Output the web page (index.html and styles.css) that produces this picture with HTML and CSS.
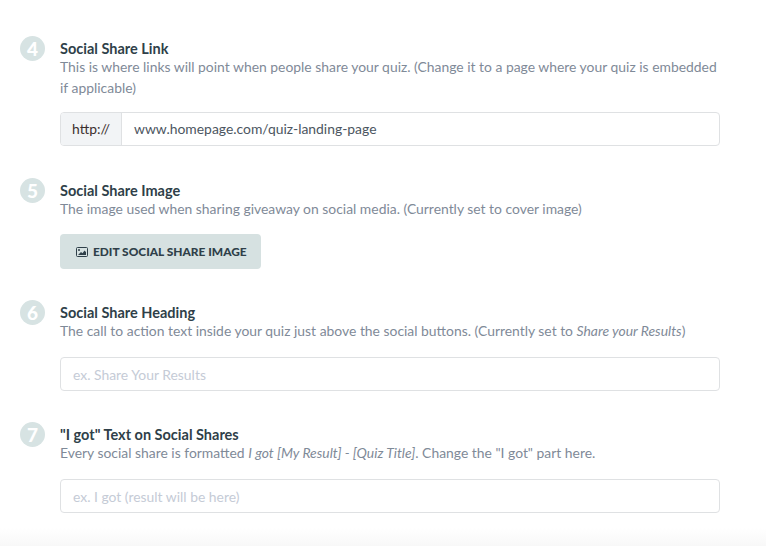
FILE: index.html
```html
<!DOCTYPE html>
<html lang="en">
<head>
  <meta charset="UTF-8"/>
  <meta name="viewport" content="width=device-width, initial-scale=1.0"/>
  <title>Social Share Settings</title>
  <link rel="stylesheet" href="styles.css">
</head>
<body>
  <div class="settings">

    <div class="step">
      <div class="step-num">4</div>
      <div class="step-body">
        <div class="step-title">Social Share Link</div>
        <div class="step-desc">This is where links will point when people share your quiz. (Change it to a page where your quiz is embedded if applicable)</div>
        <div class="field">
          <span class="field-prefix">http://</span>
          <span class="field-value">www.homepage.com/quiz-landing-page</span>
        </div>
      </div>
    </div>

    <div class="step">
      <div class="step-num">5</div>
      <div class="step-body">
        <div class="step-title">Social Share Image</div>
        <div class="step-desc">The image used when sharing giveaway on social media. (Currently set to cover image)</div>
        <button class="edit-btn">
          <svg class="edit-icon" viewBox="0 0 12 10" width="12" height="10">
            <rect x="0.5" y="0.5" width="11" height="9" rx="1" fill="none" stroke="#2f3f49"/>
            <circle cx="3" cy="3" r="1" fill="#2f3f49"/>
            <path d="M2 8 L5 5 L6.5 6.2 L8.5 3.5 L10 5 V8 Z" fill="#2f3f49"/>
          </svg>
          EDIT SOCIAL SHARE IMAGE
        </button>
      </div>
    </div>

    <div class="step">
      <div class="step-num">6</div>
      <div class="step-body">
        <div class="step-title">Social Share Heading</div>
        <div class="step-desc">The call to action text inside your quiz just above the social buttons. (Currently set to <em>Share your Results</em>)</div>
        <input class="text-input" type="text" placeholder="ex. Share Your Results"/>
      </div>
    </div>

    <div class="step">
      <div class="step-num">7</div>
      <div class="step-body">
        <div class="step-title">"I got" Text on Social Shares</div>
        <div class="step-desc">Every social share is formatted <em>I got [My Result] - [Quiz Title]</em>. Change the "I got" part here.</div>
        <input class="text-input" type="text" placeholder="ex. I got (result will be here)"/>
      </div>
    </div>

  </div>
  <div class="bottom-fade"></div>
</body>
</html>
```

FILE: styles.css
```css
* {
  margin: 0; padding: 0; box-sizing: border-box;
}
html, body {
  height: 100%;
  overflow: hidden;
}
body {
  position: relative;
  background: #fff;
  font-family: "Lato", "Liberation Sans", sans-serif;
  font-size: 13.9px;
  color: #7f8a98;
}
.settings {
  padding: 39px 46px 0 20px;
}
.step {
  display: flex;
  gap: 16px;
}
.step + .step {
  margin-top: 34px;
}
.step-num {
  flex: none;
  width: 25px;
  height: 25px;
  margin-top: -3px;
  margin-right: -1px;
  border-radius: 50%;
  background: #d7e3e3;
  color: #fff;
  font-size: 19px;
  font-weight: 900;
  line-height: 25px;
  text-align: center;
}
.step-body {
  flex: 1;
  min-width: 0;
}
.step-title {
  margin-bottom: -2px;
  color: #2f3f49;
  font-size: 14.5px;
  font-weight: 700;
  line-height: 19px;
}
.step-desc {
  line-height: 21px;
}
.step-desc em {
  font-style: italic;
}
.field {
  display: flex;
  height: 34px;
  margin: 14px 0 1px;
  border: 1px solid #dfe1e3;
  border-radius: 4px;
  line-height: 32px;
  overflow: hidden;
}
.field-prefix {
  width: 61px;
  background: #f2f4f6;
  border-right: 1px solid #dfe1e3;
  color: #3b2f2f;
  text-align: center;
}
.field-value {
  padding-left: 12px;
  color: #4c5661;
}
.edit-btn {
  display: flex;
  align-items: center;
  gap: 5px;
  height: 35px;
  margin-top: 15px;
  padding: 0 14px 0 16px;
  border: none;
  border-radius: 4px;
  background: #d6e1e1;
  color: #2f3f49;
  font-family: inherit;
  font-size: 11.9px;
  font-weight: 900;
}
.text-input {
  display: block;
  width: 100%;
  height: 34px;
  margin-top: 16px;
  padding: 0 12px;
  border: 1px solid #dfe1e3;
  border-radius: 4px;
  background: #fff;
  font-family: inherit;
  font-size: 13.9px;
}
.text-input::placeholder {
  color: #c5cbd6;
  opacity: 1;
}
.bottom-fade {
  position: absolute;
  left: 0; right: 0; bottom: 0;
  height: 18px;
  background: linear-gradient(to bottom, #fff, #f8f8f8);
}
```
